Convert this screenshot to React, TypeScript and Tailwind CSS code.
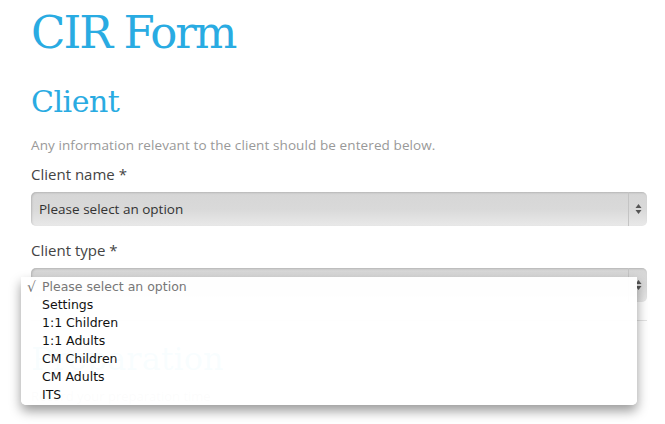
const options = ["Settings", "1:1 Children", "1:1 Adults", "CM Children", "CM Adults", "ITS"];

function SelectBox({ label }: { label?: string }) {
  return (
    <div className="relative flex h-[34px] w-[616px] items-center rounded-[5px] bg-gradient-to-b from-[#d6d6d6] via-[#d9d9d9] to-[#e9e9e9] shadow-[inset_1px_1px_2px_rgba(0,0,0,0.15)]">
      <span className="flex-1 pl-[8px] text-[13.5px] text-[#333]">{label}</span>
      <div className="flex h-full w-[19px] flex-col items-center justify-center gap-[2px] border-l border-[#c4c4c4]">
        <svg width="7" height="12" viewBox="0 0 7 12">
          <path d="M3.5 1 L6.5 5 L0.5 5 Z" fill="#555" />
          <path d="M3.5 11 L6.5 7 L0.5 7 Z" fill="#555" />
        </svg>
      </div>
    </div>
  );
}

export default function App() {
  return (
    <div className="relative h-[424px] w-[665px] overflow-hidden bg-white font-['Open_Sans',sans-serif]">
      <div className="pl-[31px]">
        <h1 className="pt-[5px] font-['DejaVu_Serif',serif] text-[45px] leading-[56px] tracking-[-2px] text-[#29abe2]">CIR Form</h1>
        <h2 className="mt-[21px] font-['DejaVu_Serif',serif] text-[30px] leading-[40px] tracking-[-0.5px] text-[#29abe2]">Client</h2>
        <p className="mt-[14px] text-[13.5px] leading-[18px] tracking-[0.1px] text-[#999]">Any information relevant to the client should be entered below.</p>
        <label className="mt-[10px] block text-[15px] leading-[20px] text-[#444]">Client name *</label>
        <div className="mt-[8px]">
          <SelectBox label="Please select an option" />
        </div>
        <label className="mt-[14px] block text-[15px] leading-[20px] text-[#444]">Client type *</label>
        <div className="mt-[8px]">
          <SelectBox />
        </div>
        <div className="mt-[18px] w-[616px] border-t border-[#e3e3e3]" />
        <h2 className="mt-[18px] font-['DejaVu_Serif',serif] text-[32px] leading-[40px] text-[#29abe2]">Preparation</h2>
        <p className="mt-[8px] text-[13px] leading-[18px] text-[#999]">Record your preparation time</p>
      </div>

      {/* open native dropdown */}
      <div className="absolute left-[21px] top-[277px] w-[616px] rounded-b-[5px] bg-white/[0.97] py-[1px] font-['DejaVu_Sans',sans-serif] text-[12.5px] leading-[18px] shadow-[0_6px_12px_rgba(0,0,0,0.4)]">
        <div className="flex items-center text-[#777]">
          <span className="w-[21px] pl-[6px] text-[14px] leading-[18px]">√</span>
          <span>Please select an option</span>
        </div>
        {options.map((o) => (
          <div key={o} className="pl-[21px] text-[#111]">
            {o}
          </div>
        ))}
      </div>
    </div>
  );
}
